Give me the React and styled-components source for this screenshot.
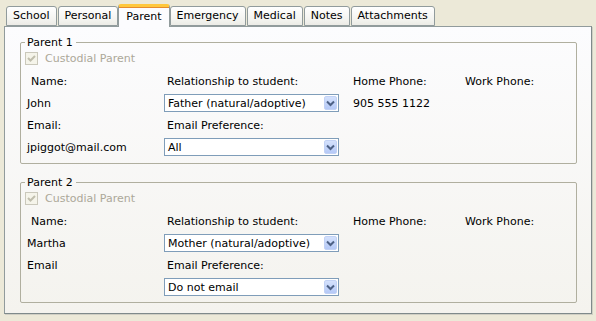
import React from "react";
import styled, { createGlobalStyle } from "styled-components";

const Global = createGlobalStyle`
  html, body { margin: 0; padding: 0; }
  body {
    background: #ece9d8;
    font-family: "DejaVu Sans", Tahoma, sans-serif;
    font-size: 11px;
    color: #000;
  }
`;

const Window = styled.div`
  width: 596px;
  height: 321px;
  box-sizing: border-box;
  padding: 3px 4px 0 4px;
  display: flex;
  flex-direction: column;
`;

const TabBar = styled.div`
  display: flex;
  align-items: flex-end;
  gap: 1px;
  padding-left: 2px;
  height: 23px;
  position: relative;
  z-index: 2;
`;

const Tab = styled.div`
  box-sizing: border-box;
  height: ${(p) => (p.$active ? "23px" : "20px")};
  margin: ${(p) => (p.$active ? "0 -1px -1px -1px" : "0")};
  padding: ${(p) => (p.$active ? "3px 7px 0 7px" : "2px 6px 0 6px")};
  border: 1px solid #919b9c;
  border-bottom: ${(p) => (p.$active ? "none" : "1px solid #919b9c")};
  border-top: ${(p) => (p.$active ? "3px solid #ffc83c" : "1px solid #919b9c")};
  border-radius: 3px 3px 0 0;
  background: ${(p) =>
    p.$active ? "#fcfcfe" : "linear-gradient(#ffffff, #f3f3ef 70%, #ecebe6)"};
  line-height: 14px;
  white-space: nowrap;
  ${(p) => (p.$active ? "box-shadow: inset 0 1px 0 #e68b2c;" : "")}
`;

const Panel = styled.div`
  box-sizing: border-box;
  height: 288px;
  border: 1px solid #919b9c;
  border-right-color: #7f8a8b;
  border-bottom-color: #7f8a8b;
  box-shadow: 1px 1px 0 #d0cfc4;
  background: linear-gradient(#fcfcfe, #f4f3ee);
  padding: 9px 14px 0 15px;
  display: flex;
  flex-direction: column;
  gap: 12px;
`;

const Group = styled.fieldset`
  margin: 0;
  padding: 0 6px ${(p) => p.$padBottom}px 6px;
  border: 1px solid #b0af9f;
  border-radius: 2px;
  min-width: 0;
`;

const Legend = styled.legend`
  padding: 0 3px 0 2px;
  margin-left: -2px;
  line-height: 13px;
  color: #000;
`;

const CheckRow = styled.div`
  display: flex;
  align-items: center;
  gap: 7px;
  margin: 3px 0 5px -2px;
  height: 13px;
  color: #aca899;
`;

const CheckBox = styled.span`
  box-sizing: border-box;
  width: 13px;
  height: 13px;
  border: 1px solid #cac8bb;
  background: #f5f4ea;
  display: inline-flex;
  align-items: center;
  justify-content: center;
`;

const Grid = styled.div`
  display: grid;
  grid-template-columns: 137px 189px 112px 1fr;
  grid-auto-rows: 22px;
  align-items: center;
`;

const Cell = styled.div`
  white-space: nowrap;
  padding-left: ${(p) => p.$indent || 0}px;
  line-height: 13px;
`;

const Select = styled.div`
  box-sizing: border-box;
  width: 175px;
  height: 18px;
  border: 1px solid #7f9db9;
  background: #fff;
  display: flex;
  align-items: center;
  justify-content: space-between;
  padding: 0 1px 0 3px;
  line-height: 13px;
`;

const Arrow = styled.span`
  box-sizing: border-box;
  width: 13px;
  height: 14px;
  border-radius: 2px;
  background: linear-gradient(#d4e1fc, #b5c9f7);
  border: 1px solid #c2d2f5;
  display: inline-flex;
  align-items: center;
  justify-content: center;
`;

const Check = () => (
  <svg width="9" height="9" viewBox="0 0 9 9">
    <path d="M1 4 L3.5 6.5 L8 2" fill="none" stroke="#c0bead" strokeWidth="2" />
  </svg>
);

const Chevron = () => (
  <svg width="9" height="7" viewBox="0 0 9 7">
    <path d="M1 1.5 L4.5 5 L8 1.5" fill="none" stroke="#4d6185" strokeWidth="2" />
  </svg>
);

const Dropdown = ({ value }) => (
  <Select>
    <span>{value}</span>
    <Arrow>
      <Chevron />
    </Arrow>
  </Select>
);

const ParentGroup = ({ title, name, rel, phone, emailLabel, email, pref, padBottom }) => (
  <Group $padBottom={padBottom}>
    <Legend>{title}</Legend>
    <CheckRow>
      <CheckBox>
        <Check />
      </CheckBox>
      <span>Custodial Parent</span>
    </CheckRow>
    <Grid>
      <Cell $indent={4}>Name:</Cell>
      <Cell $indent={3}>Relationship to student:</Cell>
      <Cell>Home Phone:</Cell>
      <Cell>Work Phone:</Cell>

      <Cell>{name}</Cell>
      <Cell>
        <Dropdown value={rel} />
      </Cell>
      <Cell>{phone}</Cell>
      <Cell />

      <Cell>{emailLabel}</Cell>
      <Cell $indent={3}>Email Preference:</Cell>
      <Cell />
      <Cell />

      <Cell>{email}</Cell>
      <Cell>
        <Dropdown value={pref} />
      </Cell>
      <Cell />
      <Cell />
    </Grid>
  </Group>
);

const tabs = ["School", "Personal", "Parent", "Emergency", "Medical", "Notes", "Attachments"];

export default function App() {
  return (
    <>
      <Global />
      <Window>
        <TabBar>
          {tabs.map((t) => (
            <Tab key={t} $active={t === "Parent"}>
              {t}
            </Tab>
          ))}
        </TabBar>
        <Panel>
          <ParentGroup
            title="Parent 1"
            name="John"
            rel="Father (natural/adoptive)"
            phone="905 555 1122"
            emailLabel="Email:"
            email="jpiggot@mail.com"
            pref="All"
            padBottom={5}
          />
          <ParentGroup
            title="Parent 2"
            name="Martha"
            rel="Mother (natural/adoptive)"
            phone=""
            emailLabel="Email"
            email=""
            pref="Do not email"
            padBottom={4}
          />
        </Panel>
      </Window>
    </>
  );
}
